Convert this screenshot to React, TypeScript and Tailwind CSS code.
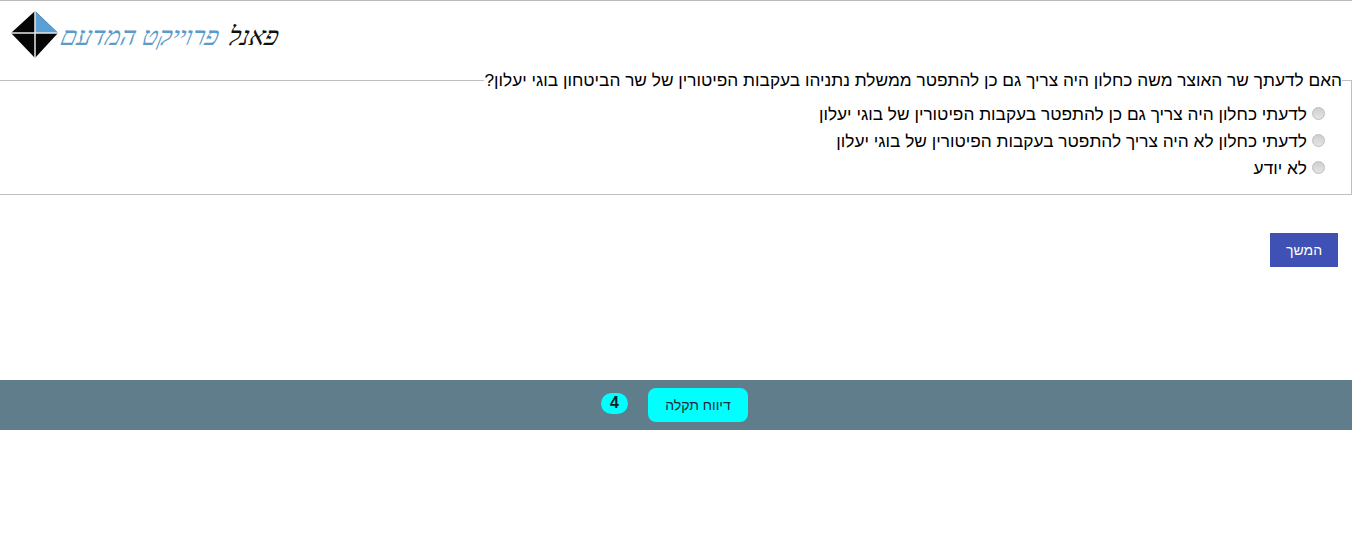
const options = [
  "לדעתי כחלון היה צריך גם כן להתפטר בעקבות הפיטורין של בוגי יעלון",
  "לדעתי כחלון לא היה צריך להתפטר בעקבות הפיטורין של בוגי יעלון",
  "לא יודע",
];

function LogoMark() {
  return (
    <svg width="48" height="48" viewBox="0 0 48 48" className="shrink-0">
      <polygon points="24,0 47,22 24,47 0,22" fill="#050505" />
      <polygon points="24,0 47,22 24,22" fill="#5a9fd6" />
      <path d="M24 0V47M0 22H47" stroke="#e6e6e6" strokeWidth="1.5" />
    </svg>
  );
}

export default function App() {
  return (
    <div dir="rtl" className="min-h-[534px] bg-white font-['Liberation_Sans',Arial,sans-serif] text-black">
      {/* Header */}
      <header dir="ltr" className="flex h-[70px] items-start gap-[2px] border-t border-[#bbbbbb] pl-[11px] pt-[10px]">
        <LogoMark />
        <div dir="rtl" className="mt-[8px] flex -skew-x-12 items-baseline gap-[10px] whitespace-nowrap font-['Liberation_Serif',serif] text-[26px] italic leading-[36px]">
          <span className="text-[#111111]">פאנל</span>
          <span className="text-[#5c9bc9]">פרוייקט המדעם</span>
        </div>
      </header>

      {/* Question */}
      <fieldset className="mx-0 h-[125px] border border-l-0 border-[#bfbfbf] pr-[9px]">
        <legend className="-mt-[1px] text-[17.3px] leading-[21px]">
          האם לדעתך שר האוצר משה כחלון היה צריך גם כן להתפטר ממשלת נתניהו בעקבות הפיטורין של שר הביטחון בוגי יעלון?
        </legend>
        <div className="pt-[10px]">
          {options.map((text) => (
            <label key={text} className="flex h-[27px] items-center gap-[5px] pr-[17px] text-[17.3px]">
              <input
                type="radio"
                name="answer"
                className="h-[13px] w-[13px] -translate-y-px appearance-none rounded-full border border-[#bdbdbd] bg-gradient-to-b from-[#cfcfcf] to-[#e4e4e4]"
              />
              <span>{text}</span>
            </label>
          ))}
        </div>
      </fieldset>

      {/* Continue */}
      <div className="pr-[14px] pt-[38px]">
        <button className="h-[34px] w-[68px] bg-[#3f51b5] text-[14px] text-white">המשך</button>
      </div>

      {/* Footer */}
      <footer className="mt-[113px] flex h-[50px] items-center justify-center gap-[20px] bg-[#607d8b] pr-[3px]">
        <button className="h-[34px] w-[100px] rounded-[8px] bg-[#00ffff] text-[14px] text-[#1c2b33]">דיווח תקלה</button>
        <span className="mb-[4px] flex h-[21px] w-[27px] items-center justify-center rounded-full bg-[#00ffff] text-[16px] font-bold text-[#10202a]">4</span>
      </footer>
    </div>
  );
}
